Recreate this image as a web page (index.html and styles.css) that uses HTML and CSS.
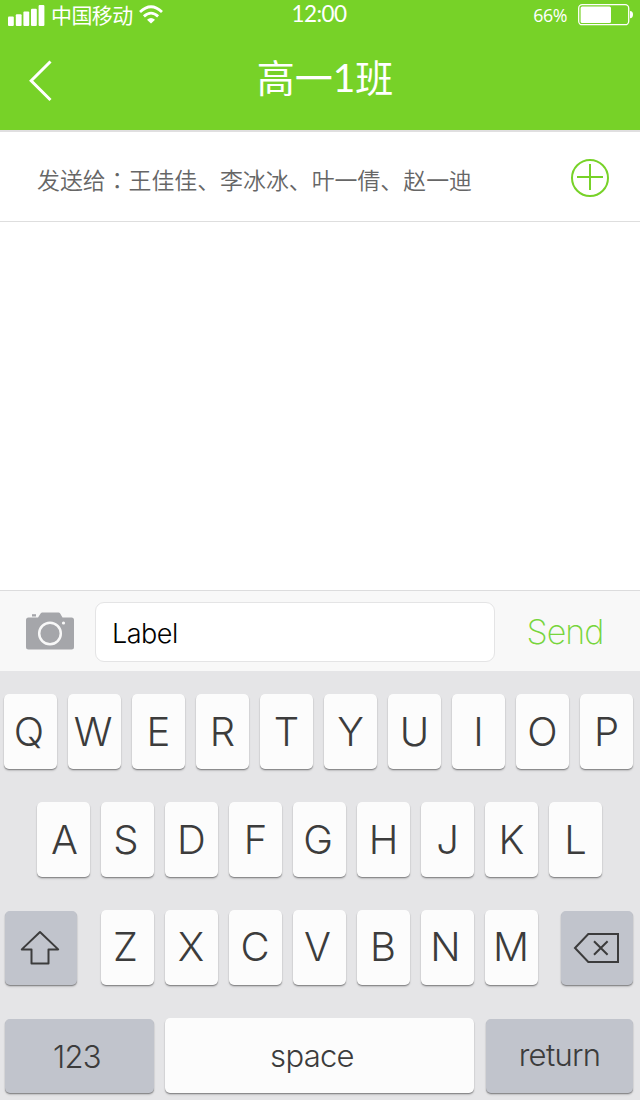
FILE: index.html
```html
<!DOCTYPE html>
<html lang="zh-CN">
<head>
<meta charset="utf-8">
<title>高一1班</title>
<link rel="stylesheet" href="styles.css">
</head>
<body>
<div class="screen">
  <header class="header">
    <div class="status">
      <div class="status-left">
        <svg class="signal" width="37" height="22" viewBox="0 0 37 22" fill="#fff"><rect x="0" y="11.4" width="5.8" height="9.6" rx="1"/><rect x="7.8" y="9.2" width="5.8" height="11.8" rx="1"/><rect x="15.4" y="6.4" width="5.8" height="14.6" rx="1"/><rect x="23" y="3.8" width="5.8" height="17.2" rx="1"/><rect x="30.6" y="0" width="5.8" height="21" rx="1"/></svg>
        <span class="carrier">中国移动</span>
        <svg class="wifi" width="24" height="19" viewBox="0 0 24 19" fill="none" stroke="#fff" stroke-width="2.8"><path d="M1 6.9Q12 -3.4 23 6.9"/><path d="M4.9 11.4Q12 4.8 19.1 11.4"/><path d="M8 14.8Q12 11 16 14.8L12 18.4Z" fill="#fff" stroke="none"/></svg>
      </div>
      <div class="clock">12:00</div>
      <div class="status-right">
        <span class="percent">66%</span>
        <svg class="battery" width="56" height="22" viewBox="0 0 56 22"><rect x=".7" y=".7" width="50" height="20" rx="3.5" fill="none" stroke="#fff" stroke-width="1.3"/><rect x="2.6" y="2.6" width="30.4" height="16.4" rx="1.5" fill="#fff"/><path d="M52 7Q55 7 55 10.6Q55 14.2 52 14.2Z" fill="#fff"/></svg>
      </div>
    </div>
    <nav class="nav">
      <svg class="back" width="24" height="42" viewBox="0 0 24 42" fill="none" stroke="#fff" stroke-width="3"><path d="M22.5 1.5L3.2 20.7L22.5 40"/></svg>
      <h1 class="title">高一<span class="title-digit">1</span>班</h1>
    </nav>
  </header>
  <section class="recipients">
    <span class="names">发送给<span class="colon" lang="zh-TW">：</span>王佳佳、李冰冰、叶一倩、赵一迪</span>
    <svg class="add" width="40" height="40" viewBox="0 0 40 40" fill="none" stroke="#77d228" stroke-width="2"><circle cx="20" cy="20" r="18"/><path d="M7 19H33M20 6V32"/></svg>
  </section>
  <main class="messages"></main>
  <section class="composer">
    <svg class="camera" width="48" height="38" viewBox="0 0 48 38"><path d="M2.5 5.5H12L14.8 1.2Q15.3.5 16.2.5H32.5Q33.5.5 34 1.3L36.5 5.5H45.5Q48 5.5 48 8V35Q48 37.5 45.5 37.5H2.5Q0 37.5 0 35V8Q0 5.5 2.5 5.5Z" fill="#a5a6aa"/><path d="M6 2.2H10V4.5H6Z" fill="#a5a6aa"/><circle cx="24" cy="21.5" r="10.8" fill="none" stroke="#f8f8f8" stroke-width="2.5"/><circle cx="37.5" cy="11" r="1.6" fill="#f8f8f8"/></svg>
    <div class="field">Label</div>
    <div class="send">Send</div>
  </section>
  <section class="keyboard">
    <div class="row row-top"><div class="key nudge-left">Q</div><div class="key nudge-left">W</div><div class="key">E</div><div class="key">R</div><div class="key">T</div><div class="key">Y</div><div class="key">U</div><div class="key">I</div><div class="key">O</div><div class="key">P</div></div>
    <div class="row row-home"><div class="key nudge-right">A</div><div class="key nudge-left">S</div><div class="key">D</div><div class="key">F</div><div class="key nudge-left">G</div><div class="key">H</div><div class="key">J</div><div class="key">K</div><div class="key">L</div></div>
    <div class="row row-shift">
      <div class="key dark shift"><svg width="40" height="36" viewBox="0 0 40 36" fill="none" stroke="#3c3c3c" stroke-width="2" stroke-linejoin="round"><path d="M20 2L38.2 19.4H28.5V33.5H11.5V19.4H1.8Z"/></svg></div>
      <div class="letters"><div class="key nudge-left">Z</div><div class="key">X</div><div class="key">C</div><div class="key nudge-left">V</div><div class="key">B</div><div class="key nudge-left">N</div><div class="key">M</div></div>
      <div class="key dark delete"><svg width="46" height="32" viewBox="0 0 46 32" fill="none" stroke="#3c3c3c" stroke-width="2"><path d="M2 16L15.3 2H45V30H15.3Z"/><path d="M21 9.2L34.6 22.8M34.6 9.2L21 22.8"/></svg></div>
    </div>
    <div class="row row-bottom"><div class="key dark numbers">123</div><div class="key space">space</div><div class="key dark return">return</div></div>
  </section>
</div>
</body>
</html>
```
FILE: styles.css
```css
* { box-sizing: border-box; }
body { margin: 0; background: #fff; }
svg { display: block; flex: none; }
.screen { width: 640px; height: 1100px; display: flex; flex-direction: column; overflow: hidden; font-family: Inter, "Liberation Sans", "Noto Sans CJK SC", sans-serif; font-weight: 300; }

.header { height: 130px; background: #77d228; color: #fff; font-family: "Open Sans", "Noto Sans CJK SC", sans-serif; font-weight: 400; }
.status { height: 30px; display: grid; grid-template-columns: 1fr 56px 1fr; }
.status-left { display: flex; align-items: flex-start; padding: 5px 0 0 8px; }
.carrier { margin: -6px 0 0 6px; font: 400 21px/30px "Noto Sans CJK SC", sans-serif; letter-spacing: -.6px; white-space: nowrap; }
.wifi { margin-left: 6px; }
.clock { font-family: Lato, sans-serif; font-size: 22.5px; line-height: 28px; letter-spacing: -.6px; margin-left: -2px; text-align: center; white-space: nowrap; }
.status-right { display: flex; justify-content: flex-end; padding: 4px 6px 0 0; }
.percent { font-size: 17.8px; line-height: 22px; margin-right: 11px; letter-spacing: -.4px; }
.nav { display: grid; grid-template-columns: 60px 1fr 60px; height: 100px; }
.back { margin: 30px 0 0 28px; }
.title { margin: 17px 0 0 10px; font: 400 38px/58px "Noto Sans CJK SC", sans-serif; text-align: center; }
.title-digit { font-family: Lato, sans-serif; font-weight: 400; font-size: 39px; line-height: 1; }

.recipients { height: 92px; border-top: 2px solid #e0dfe0; border-bottom: 1px solid #dedede; display: flex; justify-content: space-between; padding: 0 30px 0 37px; }
.names { font: 350 22.9px/34px "Noto Sans CJK SC", sans-serif; color: #666; margin-top: 30px; white-space: nowrap; }
.colon { font-family: "Noto Sans CJK TC", sans-serif; line-height: 1; }
.add { margin-top: 26px; }
.messages { flex: 1; }

.composer { height: 81px; background: #f8f8f8; border-top: 1px solid #dcdcdd; display: flex; padding: 11px 0 0 26px; }
.camera { margin-top: 9.5px; }
.field { width: 400px; height: 60px; margin-left: 21px; border: 1px solid #e4e4e5; border-radius: 9px; background: #fff; color: #000; font-size: 27px; line-height: 62px; padding-left: 16px; letter-spacing: -.5px; }
.send { width: 145px; padding-right: 5px; text-align: center; color: #77d53c; font-size: 34px; line-height: 60px; letter-spacing: -1px; font-weight: 250; }

.keyboard { height: 429px; background: #e5e5e7; padding-top: 23px; display: flex; flex-direction: column; gap: 33px; color: #3c3c3c; }
.row { display: flex; gap: 11px; height: 75px; }
.row-top { padding-left: 4px; }
.row-home { padding-left: 37px; }
.row-shift { padding-left: 5px; gap: 0; justify-content: space-between; padding-right: 7px; }
.row-bottom { padding-left: 5px; }
.letters { display: flex; gap: 11px; }
.key { width: 53px; height: 75px; flex: none; display: flex; align-items: center; justify-content: center; background: #fcfcfc; border-radius: 5px; box-shadow: 0 1px 1px #858587, 0 2px 2px #c6c6c8; font-size: 40px; line-height: 73px; padding-bottom: 1px; }
.nudge-left { padding-right: 3px; }
.nudge-right { padding-left: 2px; }
.row-shift .key { padding-bottom: 3px; }
.dark { background: #c1c4cc; height: 74px; margin-top: 1px; }
.row-shift .dark { width: 72px; padding: 0 2px 1px 0; }
.row-bottom .key { font-size: 31px; letter-spacing: -.7px; }
.row-bottom .numbers { width: 149px; padding: 1px 5px 0 0; }
.row-bottom .space { width: 309px; padding-right: 15px; padding-bottom: 1px; }
.row-bottom .return { width: 147px; margin-left: 1px; padding-bottom: 3px; }
```
